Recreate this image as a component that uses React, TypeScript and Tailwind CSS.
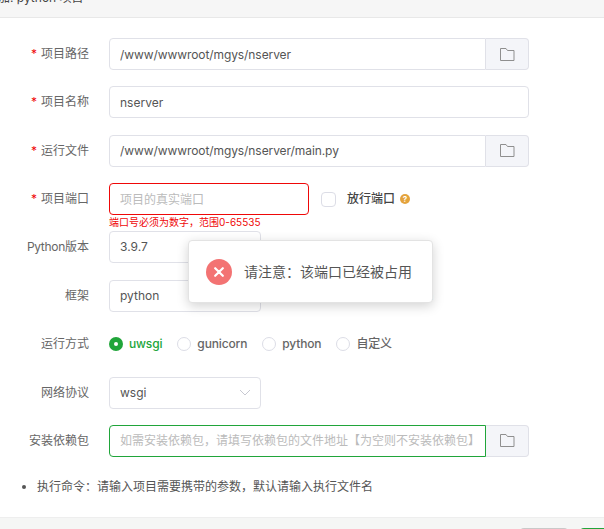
import type { ReactNode } from "react";

function FolderIcon() {
  return (
    <svg width="15" height="13" viewBox="0 0 15 13" fill="none" stroke="#8f8f8f" strokeWidth="1">
      <path d="M0.5 0.5H6L7.5 2.5H14V12.5H0.5Z" />
    </svg>
  );
}

function Row({ label, required, children }: { label: ReactNode; required?: boolean; children: ReactNode }) {
  return (
    <div className="flex items-center h-8 mb-[16.37px]">
      <label className="w-[89px] shrink-0 text-right text-xs text-[#666]">
        {required && <span className="text-[#ef0808] mr-1">*</span>}
        {label}
      </label>
      <div className="relative flex items-center ml-5 h-8">{children}</div>
    </div>
  );
}

function PathInput({ value, placeholder, focused }: { value?: string; placeholder?: string; focused?: boolean }) {
  return (
    <div className="flex w-[420px] h-8">
      <input
        readOnly
        value={value}
        placeholder={placeholder}
        className={`w-[377px] h-8 px-[10px] text-xs tracking-[-0.08px] text-[#555] placeholder:text-[#bbb] placeholder:tracking-normal rounded-l outline-none border ${
          focused ? "border-[#20a53a]" : "border-[#e0e1e8]"
        }`}
      />
      <button
        type="button"
        className="flex flex-1 items-center justify-center bg-[#f4f5f9] border border-l-0 border-[#e0e1e8] rounded-r"
      >
        <FolderIcon />
      </button>
    </div>
  );
}

function TextBox({ value }: { value: string }) {
  return (
    <input
      readOnly
      value={value}
      className="w-[420px] h-8 px-[10px] text-xs text-[#555] rounded border border-[#e0e1e8] outline-none"
    />
  );
}

function SelectBox({ value, arrow }: { value: string; arrow?: boolean }) {
  return (
    <div className="flex items-center justify-between w-[152px] h-8 px-[10px] text-xs text-[#555] rounded border border-[#e0e1e8]">
      <span>{value}</span>
      {arrow && (
        <svg width="12" height="7" viewBox="0 0 12 7" fill="none" stroke="#c8c9d2" strokeWidth="1" className="-mr-px">
          <path d="M1 1L6 6L11 1" />
        </svg>
      )}
    </div>
  );
}

function Radio({ label, checked }: { label: string; checked?: boolean }) {
  return (
    <div className={`flex items-center gap-[6px] text-xs font-medium tracking-[-0.15px] ${checked ? "text-[#20a53a]" : "text-[#666]"}`}>
      {checked ? (
        <span className="flex items-center justify-center w-[14px] h-[14px] rounded-full bg-[#20a53a]">
          <span className="w-1 h-1 rounded-full bg-white" />
        </span>
      ) : (
        <span className="w-[14px] h-[14px] rounded-full border border-[#dcdde6]" />
      )}
      <span>{label}</span>
    </div>
  );
}

export default function App() {
  return (
    <div className="relative flex flex-col h-[529px] w-[604px] overflow-hidden bg-white font-['Inter','Noto_Sans_CJK_SC',sans-serif]">
      <div className="h-[18px] shrink-0 overflow-hidden bg-[#f6f6f6] border-b border-[#e8e8e8]">
        <p className="-mt-[12px] -ml-[2px] text-xs leading-5 text-[#444]">加: python 项目</p>
      </div>

      <div className="flex-1 pt-5">
        <Row label="项目路径" required>
          <PathInput value="/www/wwwroot/mgys/nserver" />
        </Row>
        <Row label="项目名称" required>
          <TextBox value="nserver" />
        </Row>
        <Row label="运行文件" required>
          <PathInput value="/www/wwwroot/mgys/nserver/main.py" />
        </Row>
        <Row label="项目端口" required>
          <input
            readOnly
            placeholder="项目的真实端口"
            className="w-[200px] h-8 px-[10px] text-xs placeholder:text-[#bbb] rounded border border-[#ef0808] outline-none"
          />
          <span className="ml-[12px] w-[15px] h-[15px] rounded-sm border border-[#dcdde6]" />
          <span className="ml-[11px] text-xs font-medium text-[#444]">放行端口</span>
          <span className="flex items-center justify-center ml-[5px] w-[10px] h-[10px] rounded-full bg-[#e4a33c] text-[8px] font-bold text-white">
            ?
          </span>
          <p className="absolute left-0 top-[33px] whitespace-nowrap text-[10px] leading-3 text-[#ef0808]">
            端口号必须为数字，范围0-65535
          </p>
        </Row>
        <Row label={<><span className="tracking-[-0.3px]">Python</span>版本</>}>
          <SelectBox value="3.9.7" />
        </Row>
        <Row label="框架">
          <SelectBox value="python" />
          <span className="absolute left-[285px] text-xs text-[#666] whitespace-nowrap">python</span>
        </Row>
        <Row label="运行方式">
          <div className="flex items-center gap-[15px]">
            <Radio label="uwsgi" checked />
            <Radio label="gunicorn" />
            <Radio label="python" />
            <Radio label="自定义" />
          </div>
        </Row>
        <Row label="网络协议">
          <SelectBox value="wsgi" arrow />
        </Row>
        <Row label="安装依赖包">
          <PathInput placeholder="如需安装依赖包，请填写依赖包的文件地址【为空则不安装依赖包】" focused />
        </Row>
        <ul className="mt-[22px] ml-[37px] list-disc text-xs leading-4 text-[#555]">
          <li>执行命令：请输入项目需要携带的参数，默认请输入执行文件名</li>
        </ul>
      </div>

      <div className="flex justify-end gap-3 h-3 shrink-0 pt-[10px] bg-[#f5f6f5] border-t border-[#eeeeee]">
        <span className="w-12 h-6 shrink-0 rounded-t bg-[#c9c9c9]" />
        <span className="w-6 h-6 shrink-0 rounded-tl bg-[#20a53a]" />
      </div>

      <div className="absolute left-[188px] top-[240px] flex items-center w-[245px] h-[63px] pl-[17px] bg-white border border-[#e3e3e3] rounded shadow-[0_3px_12px_rgba(0,0,0,0.18)]">
        <span className="flex items-center justify-center w-[26px] h-[26px] rounded-full bg-[#f37373]">
          <svg width="10" height="10" viewBox="0 0 10 10" stroke="white" strokeWidth="2.2" strokeLinecap="round">
            <path d="M1.2 1.2L8.8 8.8M8.8 1.2L1.2 8.8" />
          </svg>
        </span>
        <span className="ml-3 text-sm text-[#555] whitespace-nowrap">请注意：该端口已经被占用</span>
      </div>
    </div>
  );
}
